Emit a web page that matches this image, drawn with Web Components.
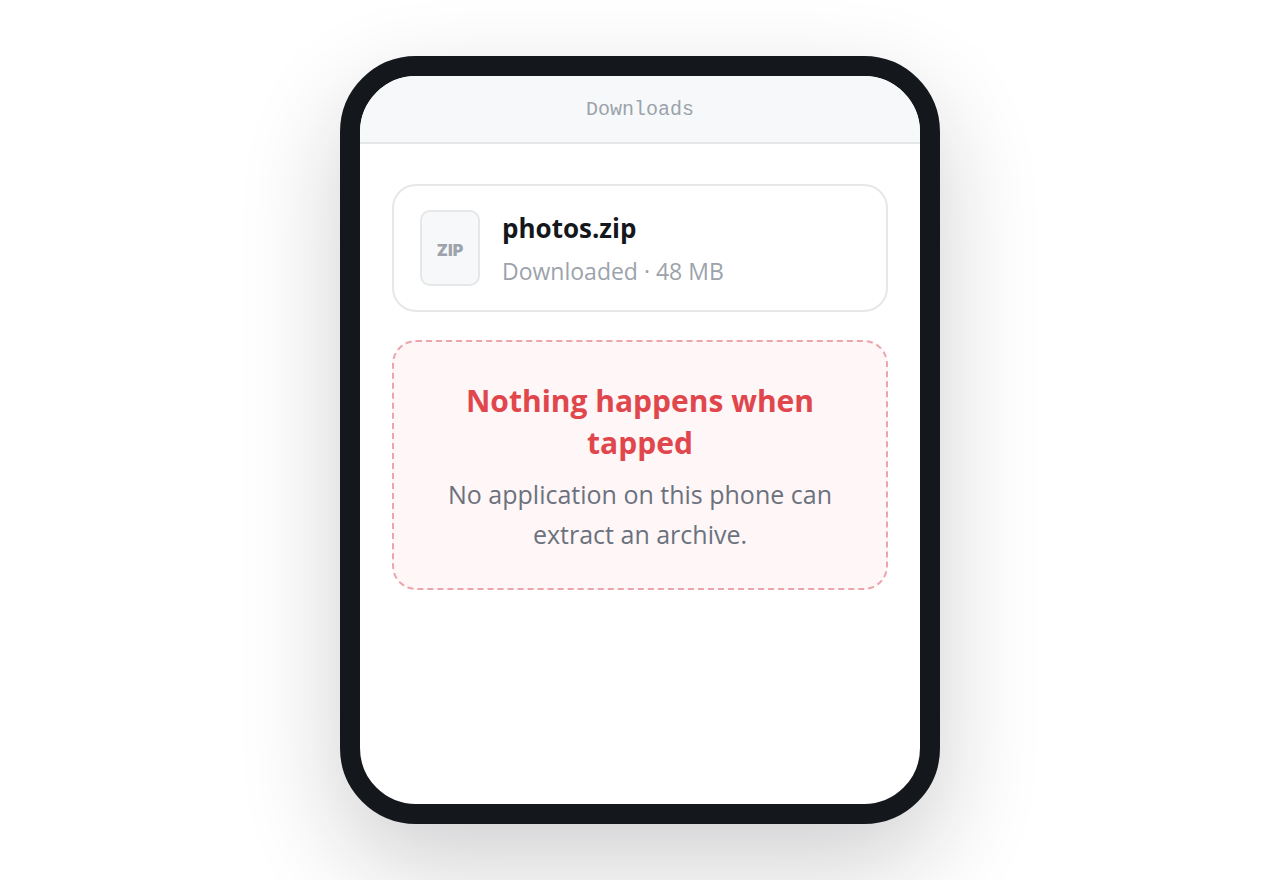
<!DOCTYPE html>
<html lang="en">
<head>
<meta charset="utf-8">
<meta name="viewport" content="width=device-width, initial-scale=1">
<title>Downloads</title>
<style>
  body {
    margin: 0;
    background: #fff;
    color: #14181c;
    font-family: "Segoe UI", "Open Sans", "Noto Sans", sans-serif;
    --ink: #14181c;
    --muted: #9ca3ab;
    --line: #e5e7e9;
    --tint: #f6f8fa;
    --danger: #e0474c;
  }
</style>
</head>
<body>
<phone-frame>
  <screen-title slot="header">Downloads</screen-title>
  <file-card kind="ZIP">
    <span slot="name">photos.zip</span>
    <span slot="status">Downloaded · 48 MB</span>
  </file-card>
  <alert-panel>
    <span slot="title">Nothing happens when tapped</span>
    No application on this phone can extract an archive.
  </alert-panel>
</phone-frame>

<script>
  function define(name, markup, connected) {
    const template = document.createElement('template');
    template.innerHTML = markup;
    customElements.define(name, class extends HTMLElement {
      constructor() {
        super();
        this.attachShadow({ mode: 'open' }).append(template.content.cloneNode(true));
      }
      connectedCallback() {
        if (connected) connected(this);
      }
    });
  }

  define('phone-frame', `
    <style>
      :host {
        display: flex;
        justify-content: center;
        box-sizing: border-box;
        min-height: 100vh;
        padding: 56px 24px;
      }
      .device {
        display: flex;
        flex-direction: column;
        box-sizing: border-box;
        width: 100%;
        max-width: 600px;
        border: 20px solid var(--ink);
        border-radius: 76px;
        background: #fff;
        box-shadow: 0 40px 100px rgba(20, 22, 28, .2);
        overflow: hidden;
      }
      .content {
        display: flex;
        flex-direction: column;
        gap: 28px;
        padding: 40px 32px;
      }
    </style>
    <main class="device">
      <slot name="header"></slot>
      <div class="content"><slot></slot></div>
    </main>`);

  define('screen-title', `
    <style>
      :host {
        display: block;
        padding: 21px 24px 19px;
        border-bottom: 2px solid var(--line);
        background: var(--tint);
      }
      h1 {
        margin: 0;
        color: var(--muted);
        font: 400 20px/26px Consolas, "Liberation Mono", monospace;
        text-align: center;
      }
    </style>
    <h1><slot></slot></h1>`);

  define('file-card', `
    <style>
      :host { display: block; }
      article {
        display: flex;
        align-items: center;
        gap: 22px;
        padding: 24px 26px;
        border: 2px solid var(--line);
        border-radius: 24px;
      }
      .kind {
        display: flex;
        flex: none;
        align-items: center;
        justify-content: center;
        box-sizing: border-box;
        width: 60px;
        height: 76px;
        padding-top: 4px;
        border: 2px solid var(--line);
        border-radius: 10px;
        background: var(--tint);
        color: var(--muted);
        font-family: Inter, sans-serif;
        font-size: 16px;
        font-weight: 900;
      }
      .text { min-width: 0; }
      h2, p { margin: 0; }
      h2 { font-size: 26px; line-height: 36px; font-weight: 700; }
      p { margin-top: 10px; font-size: 23px; line-height: 30px; color: var(--muted); }
    </style>
    <article>
      <span class="kind"></span>
      <div class="text">
        <h2><slot name="name"></slot></h2>
        <p><slot name="status"></slot></p>
      </div>
    </article>`,
    host => { host.shadowRoot.querySelector('.kind').textContent = host.getAttribute('kind'); });

  define('alert-panel', `
    <style>
      :host { display: block; }
      section {
        padding: 38px 40px 34px;
        border: 2px dashed #eba5ab;
        border-radius: 24px;
        background: #fff6f7;
        text-align: center;
      }
      h2, p { margin: 0; }
      h2 { font-size: 30px; line-height: 42px; font-weight: 700; color: var(--danger); }
      p { margin-top: 10px; font-size: 25px; line-height: 40px; color: #6b727d; }
    </style>
    <section role="status">
      <h2><slot name="title"></slot></h2>
      <p><slot></slot></p>
    </section>`);
</script>
</body>
</html>
